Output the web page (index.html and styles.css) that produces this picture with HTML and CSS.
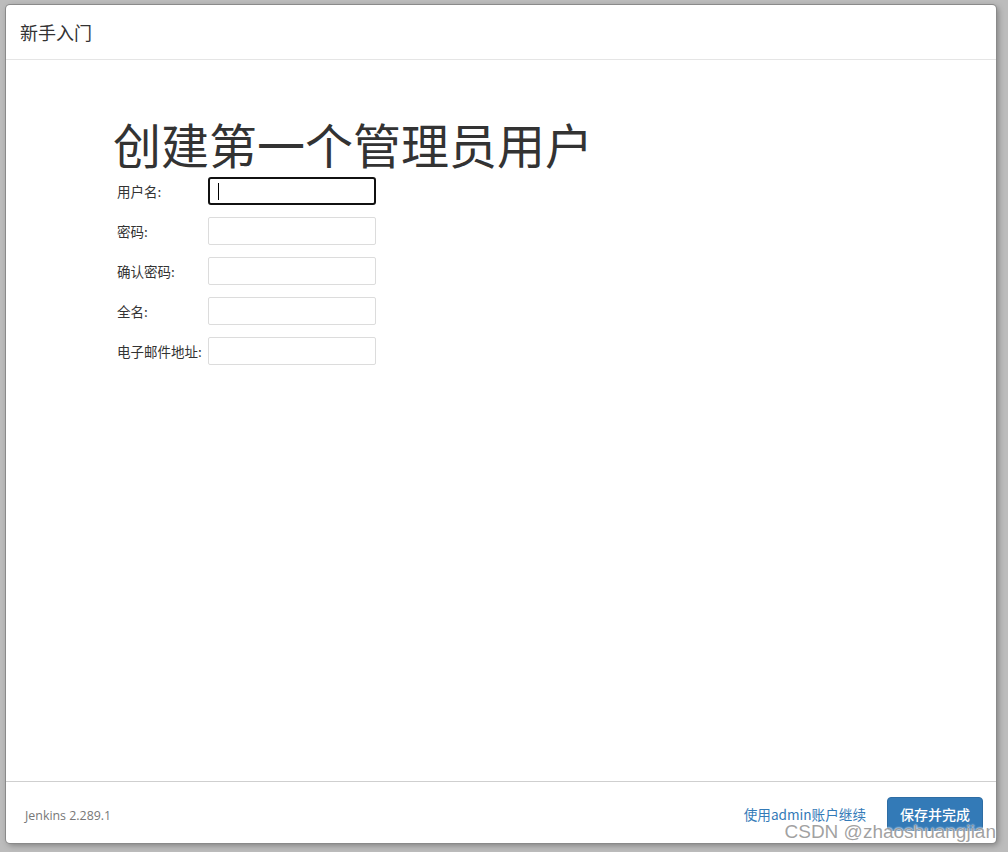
FILE: index.html
```html
<!DOCTYPE html>
<html lang="zh-CN">
<head>
<meta charset="utf-8">
<title>新手入门</title>
<link rel="stylesheet" href="styles.css">
</head>
<body>
<div class="modal">
  <div class="modal-header">新手入门</div>
  <div class="modal-body">
    <h1 class="title">创建第一个管理员用户</h1>
    <form class="form">
      <label class="lbl">用户名:</label>
      <div class="field focused"><span class="caret"></span></div>
      <label class="lbl">密码:</label>
      <div class="field"></div>
      <label class="lbl">确认密码:</label>
      <div class="field"></div>
      <label class="lbl">全名:</label>
      <div class="field"></div>
      <label class="lbl">电子邮件地址:</label>
      <div class="field"></div>
    </form>
  </div>
  <div class="modal-footer">
    <span class="version">Jenkins 2.289.1</span>
    <div class="actions">
      <a class="skip">使用admin账户继续</a>
      <button class="save" type="button">保存并完成</button>
    </div>
    <div class="watermark">CSDN @zhaoshuangjian</div>
  </div>
</div>
</body>
</html>
```
FILE: styles.css
```css
html, body {
  margin: 0;
  padding: 0;
}
body {
  width: 1008px;
  height: 852px;
  background: #bcbcbc;
  font-family: "Noto Sans CJK SC", "Noto Sans", sans-serif;
  color: #333;
  overflow: hidden;
}
.modal {
  position: relative;
  margin: 5px 0 0 6px;
  width: 990px;
  height: 838px;
  background: #fff;
  border-radius: 4px;
  box-shadow: 0 0 0 1px #8a8a8a, 2px 2px 6px rgba(0,0,0,0.35);
  display: flex;
  flex-direction: column;
}
.modal-header {
  height: 55px;
  box-sizing: border-box;
  border-bottom: 1px solid #e5e5e5;
  padding-left: 14px;
  font-size: 18px;
  line-height: 55px;
  color: #333;
}
.modal-body {
  flex: 1;
  padding: 56px 0 0 107px;
}
.title {
  margin: 0 0 7px 0;
  font-size: 48px;
  font-weight: 400;
  line-height: 54px;
  color: #333;
}
.form {
  display: grid;
  grid-template-columns: 91px 168px;
  row-gap: 12px;
  margin-left: 4px;
  align-items: center;
}
.lbl {
  font-size: 13.5px;
  line-height: 28px;
  color: #333;
  white-space: nowrap;
}
.field {
  height: 28px;
  box-sizing: border-box;
  border: 1px solid #dcdcdc;
  border-radius: 2px;
  background: #fff;
  position: relative;
}
.field.focused {
  border: 2px solid #111;
  border-radius: 3px;
}
.caret {
  position: absolute;
  left: 8px;
  top: 4px;
  width: 1px;
  height: 17px;
  background: #000;
}
.modal-footer {
  position: relative;
  height: 62px;
  box-sizing: border-box;
  border-top: 1px solid #cfcfcf;
  display: flex;
  align-items: center;
  justify-content: space-between;
  padding: 0 13px 0 19px;
}
.version {
  font-family: "Open Sans", "Noto Sans", sans-serif;
  font-size: 12.4px;
  color: #777;
  padding-top: 6px;
}
.actions {
  display: flex;
  align-items: center;
  gap: 21px;
  padding-top: 2px;
}
.skip {
  font-size: 13.6px;
  color: #337ab7;
  text-decoration: none;
}
.save {
  font-family: "Noto Sans CJK SC", sans-serif;
  width: 96px;
  height: 34px;
  border: 1px solid #2e6da4;
  border-radius: 4px;
  background: #337ab7;
  color: #fff;
  font-size: 14px;
  font-weight: 500;
  padding: 0;
}
.watermark {
  position: absolute;
  right: 0;
  top: 39px;
  font-family: "Liberation Sans", sans-serif;
  font-size: 19px;
  color: rgba(130,130,130,0.75);
  text-shadow: 0 0 2px #fff, 0 0 2px #fff;
  white-space: nowrap;
}
```
